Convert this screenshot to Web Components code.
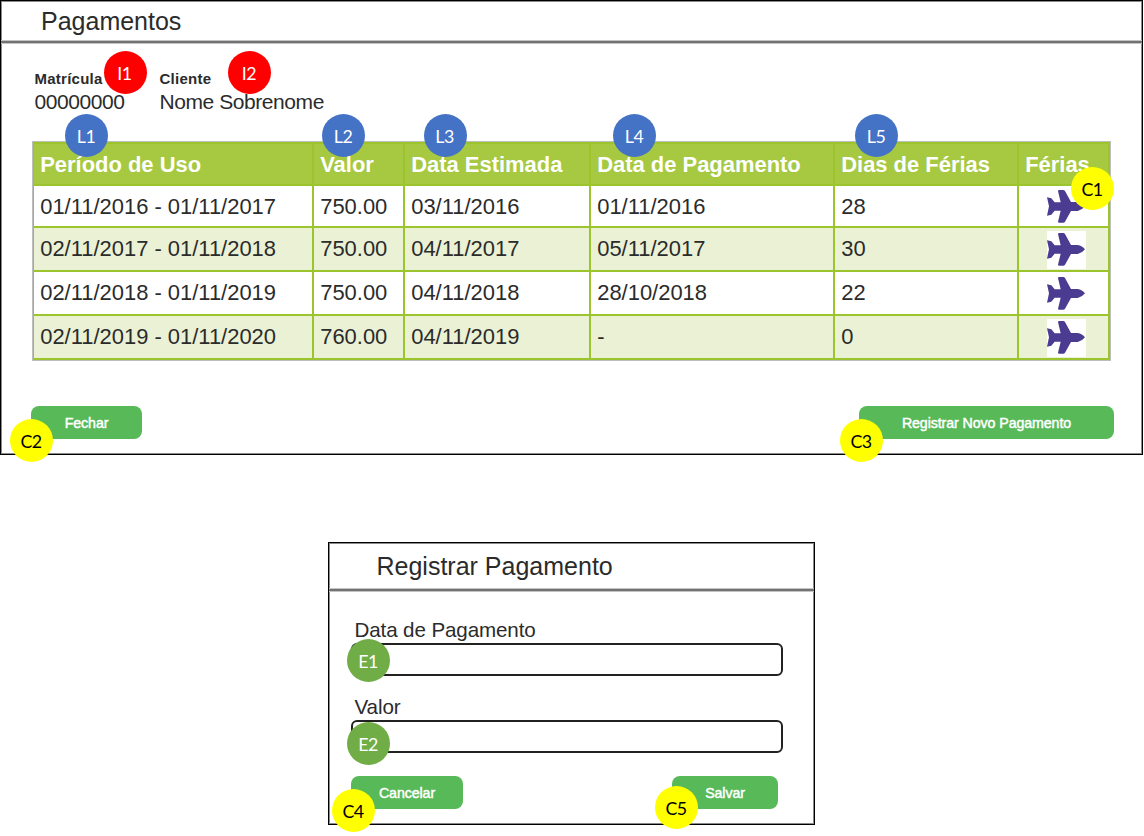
<!DOCTYPE html>
<html lang="pt-BR">
<head>
<meta charset="utf-8">
<title>Pagamentos</title>
<style>
  body { margin: 0; background: #fff; font-family: "Liberation Sans", Arial, sans-serif; color: #2b2b2b; }
</style>
</head>
<body>
<payments-app></payments-app>
<script>
const define = (name, html) => {
  const template = document.createElement('template');
  template.innerHTML = html;
  customElements.define(name, class extends HTMLElement {
    constructor() {
      super();
      this.attachShadow({ mode: 'open' }).append(template.content.cloneNode(true));
    }
  });
};

/* Framed window with a title bar */
define('ui-panel', `
<style>
  :host { display: flex; flex-direction: column; box-sizing: border-box; border: 1px solid #000; box-shadow: inset 0 0 0 1px #8a8a8a; background: #fff; }
  header { box-sizing: border-box; height: var(--bar, 40px); line-height: var(--bar-line, 40px); padding-left: var(--indent, 40px); font-size: 25px; white-space: nowrap; }
  .rule { height: 2px; background: #727272; box-shadow: 0 -1px #c4c4c4, 0 1px #c4c4c4; }
  .body { flex: 1; display: flex; flex-direction: column; }
</style>
<header><slot name="title"></slot></header>
<div class="rule"></div>
<div class="body"><slot></slot></div>`);

/* Bold caption over a value */
define('info-field', `
<style>
  :host { display: flex; flex-direction: column; white-space: nowrap; }
  .label { font-size: 15px; font-weight: bold; line-height: 20px; letter-spacing: .25px; }
  .value { font-size: 21px; line-height: 26px; letter-spacing: -.43px; }
</style>
<span class="label"><slot name="label"></slot></span>
<span class="value"><slot></slot></span>`);

define('action-button', `
<style>
  :host { display: block; }
  button { display: block; width: 100%; height: 33px; border: 0; padding: 0; border-radius: 8px; background: #57b957; color: #fff;
    font: 14.2px/33px "Liberation Sans", Arial, sans-serif; -webkit-text-stroke: .45px #fff; white-space: nowrap; letter-spacing: -.08px; }
  span { display: block; height: 33px; line-height: 34px; }
</style>
<button type="button"><span><slot></slot></span></button>`);

define('form-field', `
<style>
  :host { display: block; }
  .label { display: block; font-size: 20.6px; letter-spacing: -.12px; line-height: 26px; padding-left: 3.5px; }
  input { display: block; box-sizing: border-box; width: 100%; height: 33px; margin: 0; border: 2px solid #222; border-radius: 6px; background: #fff; }
</style>
<label><span class="label"><slot></slot></span><input type="text"></label>`);

define('plane-icon', `
<style>
  :host { display: block; width: 39px; height: 38px; background: #fff; }
  svg { display: block; }
</style>
<svg width="39" height="38" viewBox="0 0 117 114" fill="#4b3c92">
  <path d="M0 28L13 31L23 43H41L33 9Q33 6 37 6H49Q52 6 54 9L72 42H92Q106 44 114 55Q106 66 92 69H72L54 101Q52 104 49 104H37Q33 104 33 101L41 68H23L13 80L0 83L6 55Z"/>
</svg>`);

/* Row with six slotted cells */
define('payment-row', `
<style>
  :host { display: grid; grid-template-columns: 278px 89px 184px 242px 182px 89px; grid-template-rows: var(--h, 42px); column-gap: 2px; height: var(--h, 42px); line-height: var(--lh, var(--h, 42px)); font-size: 21.95px; white-space: nowrap; }
  ::slotted(*) { box-sizing: border-box; padding-left: 6.2px; background: #fff; }
  :host([alt]) ::slotted(*) { background: #eaf1d5; }
  :host([head]) { color: #fff; font-weight: bold; }
  :host([head]) ::slotted(*) { background: #a6c941; }
</style>
<slot></slot>`);

define('payment-table', `
<style>
  :host { display: flex; flex-direction: column; box-sizing: border-box; gap: 2px; border: 1px solid #bdbdbd; padding: 2px 2px 2px 1px; background: #9cc52d; }
</style>
<slot></slot>`);

/* Annotation circle lying over the screens */
define('marker-badge', `
<style>
  :host { position: absolute; width: 43px; height: 43px; border-radius: 50%; text-align: center;
    font: 17.8px/45px Lato, "Open Sans", sans-serif; letter-spacing: -.5px; text-indent: -1px; color: #fff; background: #4472c4; }
  :host([kind="info"]) { background: #f00; }
  :host([kind="command"]) { background: #ff0; color: #000; }
  :host([kind="entry"]) { background: #70ad47; }
</style>
<slot></slot>`);

define('payments-app', `
<style>
  :host { display: block; position: relative; width: 1144px; height: 836px; overflow: hidden; }
  .list { width: 1143px; height: 455px; }
  .client { display: flex; margin: 26px 0 0 33.5px; height: 47px; }
  .client info-field:first-child { width: 125px; }
  payment-table { width: 1079px; height: 220px; margin: 25px 0 0 31px; }
  .icon { display: grid; place-items: center; padding: 2px 0 0 5px; }
  .list .actions { display: flex; justify-content: space-between; margin: 45px 28px 0 30px; }
  .register { width: 487px; height: 283px; margin: 87px 0 0 328px; --bar: 46px; --bar-line: 47px; --indent: 47.5px; }
  .register form-field { margin: 26px 31px 0 22px; }
  .register form-field + form-field { margin-top: 18px; }
  .register .actions { display: flex; justify-content: space-between; margin: 23px 36px 0 22px; }
</style>
<ui-panel class="list">
  <span slot="title">Pagamentos</span>
  <div class="client">
    <info-field><span slot="label">Matrícula</span>00000000</info-field>
    <info-field><span slot="label">Cliente</span>Nome Sobrenome</info-field>
  </div>
  <payment-table>
    <payment-row head style="--h:40px;--lh:42px"><span>Período de Uso</span><span>Valor</span><span>Data Estimada</span><span>Data de Pagamento</span><span>Dias de Férias</span><span>Férias</span></payment-row>
    <payment-row style="--h:40px;--lh:42px"><span>01/11/2016 - 01/11/2017</span><span>750.00</span><span>03/11/2016</span><span>01/11/2016</span><span>28</span><span class="icon"><plane-icon></plane-icon></span></payment-row>
    <payment-row alt><span>02/11/2017 - 01/11/2018</span><span>750.00</span><span>04/11/2017</span><span>05/11/2017</span><span>30</span><span class="icon"><plane-icon></plane-icon></span></payment-row>
    <payment-row><span>02/11/2018 - 01/11/2019</span><span>750.00</span><span>04/11/2018</span><span>28/10/2018</span><span>22</span><span class="icon"><plane-icon></plane-icon></span></payment-row>
    <payment-row alt><span>02/11/2019 - 01/11/2020</span><span>760.00</span><span>04/11/2019</span><span>-</span><span>0</span><span class="icon"><plane-icon></plane-icon></span></payment-row>
  </payment-table>
  <div class="actions">
    <action-button style="width:111px">Fechar</action-button>
    <action-button style="width:255px">Registrar Novo Pagamento</action-button>
  </div>
</ui-panel>
<ui-panel class="register">
  <span slot="title">Registrar Pagamento</span>
  <form-field>Data de Pagamento</form-field>
  <form-field>Valor</form-field>
  <div class="actions">
    <action-button style="width:112px">Cancelar</action-button>
    <action-button style="width:106px">Salvar</action-button>
  </div>
</ui-panel>
<marker-badge kind="info" style="left:103.5px;top:51px">I1</marker-badge>
<marker-badge kind="info" style="left:228px;top:51px">I2</marker-badge>
<marker-badge style="left:65px;top:114px">L1</marker-badge>
<marker-badge style="left:322px;top:114px">L2</marker-badge>
<marker-badge style="left:423.5px;top:114px">L3</marker-badge>
<marker-badge style="left:613px;top:114px">L4</marker-badge>
<marker-badge style="left:855px;top:114px">L5</marker-badge>
<marker-badge kind="command" style="left:1071px;top:167px">C1</marker-badge>
<marker-badge kind="command" style="left:10px;top:419px">C2</marker-badge>
<marker-badge kind="command" style="left:840px;top:419px">C3</marker-badge>
<marker-badge kind="entry" style="left:347px;top:639px">E1</marker-badge>
<marker-badge kind="entry" style="left:347px;top:722px">E2</marker-badge>
<marker-badge kind="command" style="left:332px;top:789px">C4</marker-badge>
<marker-badge kind="command" style="left:655px;top:786px">C5</marker-badge>`);
</script>
</body>
</html>
